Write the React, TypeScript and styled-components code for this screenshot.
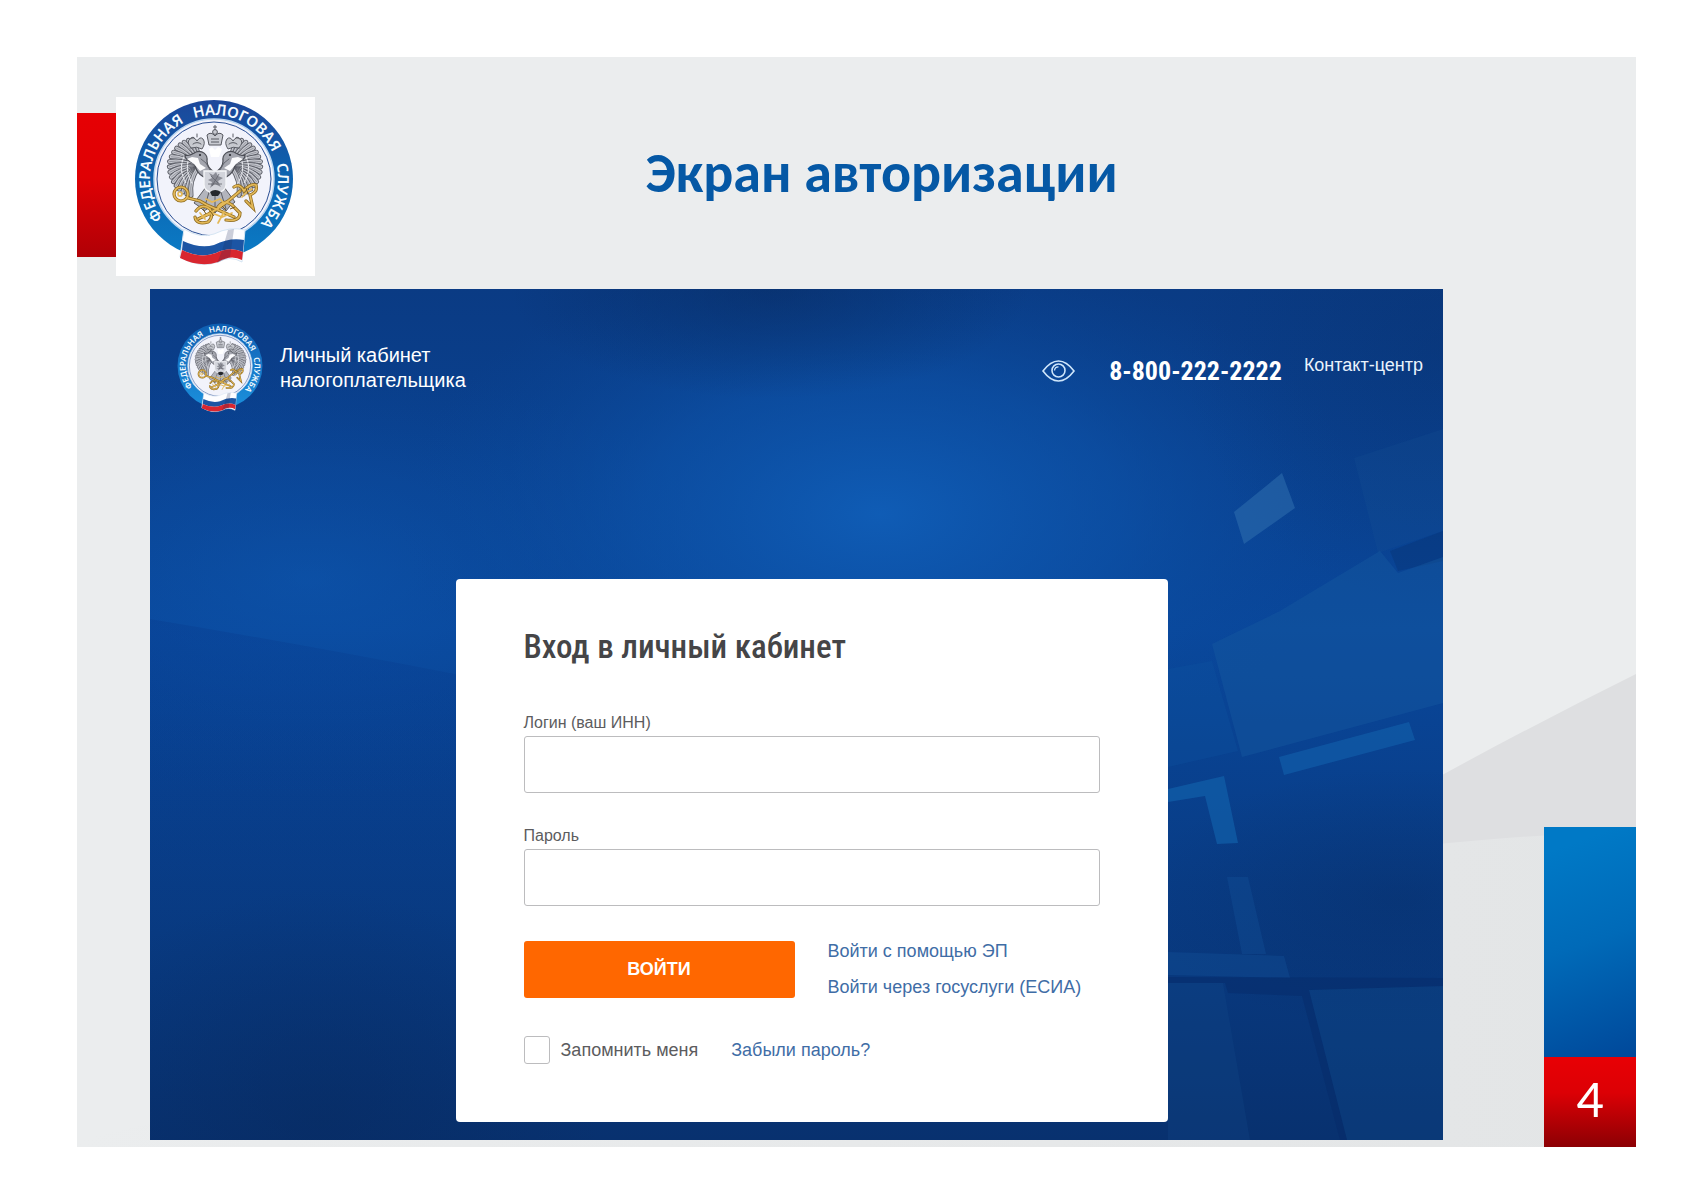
import React, { useId } from "react";
import styled, { createGlobalStyle } from "styled-components";

const GlobalStyle = createGlobalStyle`
  *, *::before, *::after { box-sizing: border-box; }
  body {
    margin: 0;
    background: #fff;
    font-family: "Liberation Sans", Arial, sans-serif;
  }
`;

const condensed = `"Roboto Condensed", "Open Sans Condensed", Roboto, sans-serif`;
const office = `Carlito, Calibri, Lato, sans-serif`;

/* ---------- Slide ---------- */

const Page = styled.main`
  min-height: 100vh;
  padding: 57px 48px 43px 77px;
`;

const Slide = styled.article`
  display: grid;
  background: #ebedee;
`;

const Layer = styled.div`
  grid-area: 1 / 1;
  min-width: 0;
`;

const Backdrop = styled.svg`
  grid-area: 1 / 1;
  width: 100%;
  height: 100%;
  min-height: 0;
  contain: size;
  display: block;
`;

const SlideHeader = styled.header`
  display: flex;
  height: 232px;
  padding-right: 188px;
`;

const RedMark = styled.div`
  width: 39px;
  height: 144px;
  margin-top: 56px;
  background: linear-gradient(#e60004, #e00004 45%, #b00006);
`;

const LogoPlate = styled.div`
  display: flex;
  justify-content: center;
  width: 199px;
  height: 179px;
  margin-top: 40px;
  padding: 2px 4px 0 0;
  background: #fff;
`;

const SlideTitle = styled.h1`
  flex: 1;
  margin: 82px 0 0;
  color: #0558a5;
  font: 700 56px/68px ${office};
  text-align: center;
`;

const SlideBody = styled.div`
  display: flex;
  align-items: flex-end;
  padding-left: 73px;
`;

const SlideTab = styled.aside`
  width: 92px;
  margin-left: 101px;
`;

const BlueTab = styled.div`
  height: 230px;
  background: linear-gradient(160deg, #0079c6 10%, #006ab8 50%, #00489a 100%);
`;

const PageNumber = styled.div`
  height: 90px;
  background: linear-gradient(#e80005, #dc0005 40%, #8c0004);
  color: #fff;
  font: 400 54px/84px ${office};
  text-align: center;
`;

/* ---------- Login screen ---------- */

const Screen = styled.section`
  display: grid;
  flex: 1;
  min-width: 0;
  margin-bottom: 7px;
  background: #0a4290;
`;

const ScreenContent = styled(Layer)`
  display: flex;
  flex-direction: column;
  gap: 166px;
  padding: 34px 20px 18px 27px;
`;

const TopBar = styled.div`
  display: flex;
  align-items: center;
  color: #fff;
`;

const Brand = styled.div`
  display: flex;
  align-items: center;
  gap: 17px;
  margin-right: auto;
  font-size: 20px;
  line-height: 25px;
`;

const IconButton = styled.button`
  display: flex;
  padding: 0;
  border: 0;
  margin: 6px 34px 0 0;
  background: none;
  color: #cfe6fb;
  cursor: pointer;
`;

const Phone = styled.a`
  margin: 6px 22px 0 0;
  color: #fff;
  font: 700 26px/32px ${condensed};
  text-decoration: none;
`;

const ContactLink = styled.a`
  color: #e9f3fd;
  font-size: 18px;
  line-height: 24px;
  margin-bottom: 6px;
  text-decoration: none;
`;

const CardRow = styled.div`
  display: flex;
  justify-content: center;
  padding-left: 23px;
`;

const Card = styled.form`
  width: 100%;
  max-width: 712px;
  padding: 48px 68px 58px;
  border-radius: 4px;
  background: #fff;
`;

const CardTitle = styled.h2`
  margin: 0 0 46px;
  color: #454547;
  font: 500 33px/40px ${condensed};
`;

const Field = styled.div`
  display: flex;
  flex-direction: column;
  gap: 3px;
  margin-bottom: 33px;
`;

const FieldLabel = styled.label`
  color: #5c5c5e;
  font-size: 16px;
  line-height: 20px;
`;

const TextInput = styled.input`
  width: 100%;
  height: 57px;
  padding: 0 16px;
  border: 1px solid #bcbcbe;
  border-radius: 3px;
  background: #fff;
  font: inherit;
  font-size: 18px;
`;

const Actions = styled.div`
  display: flex;
  align-items: center;
  gap: 33px;
  margin-bottom: 37px;
`;

const SubmitButton = styled.button`
  width: 271px;
  height: 57px;
  border: 0;
  border-radius: 3px;
  background: #ff6700;
  color: #fff;
  font: 700 18px/24px "Liberation Sans", Arial, sans-serif;
  cursor: pointer;
`;

const LinkList = styled.div`
  display: flex;
  flex-direction: column;
  gap: 12px;
`;

const TextLink = styled.a`
  color: #3f6da6;
  font-size: 18px;
  line-height: 24px;
  text-decoration: none;
`;

const Options = styled.div`
  display: flex;
  align-items: center;
  gap: 33px;
`;

const Remember = styled.label`
  display: flex;
  align-items: center;
  gap: 11px;
  color: #5c5c5e;
  font-size: 18px;
  line-height: 24px;
`;

const Checkbox = styled.input`
  appearance: none;
  width: 26px;
  height: 28px;
  margin: 0;
  border: 1px solid #bcbcbe;
  border-radius: 3px;
  background: #fff;
  &:checked { background: #3f6da6; }
`;

/* ---------- Drawings ---------- */

const SealText = styled.text`
  fill: #f4fbff;
  font: 600 15px "Noto Sans", sans-serif;
  text-anchor: middle;
`;

const rad = (deg: number) => (deg * Math.PI) / 180;

/* Flight feathers of the left wing, fanned around the shoulder. */
const feathers: string[] = Array.from({ length: 17 }, (_, i) => {
  const a = rad(258 - i * 9.5);
  const reach = 29 - Math.abs(i - 7) * 0.4;
  const cx = 64;
  const cy = 69;
  const x = cx + Math.cos(a) * reach;
  const y = cy + Math.sin(a) * (reach + 3);
  const mx = cx + Math.cos(a + 0.35) * reach * 0.6;
  const my = cy + Math.sin(a + 0.35) * reach * 0.6;
  return `M${cx} ${cy}Q${mx.toFixed(1)} ${my.toFixed(1)} ${x.toFixed(1)} ${y.toFixed(1)}`;
});

function Wing() {
  return (
    <g fill="none" strokeLinecap="round">
      {feathers.map((d) => (
        <g key={d}>
          <path d={d} stroke="#5b5d66" strokeWidth="5" />
          <path d={d} stroke="#c6c8cf" strokeWidth="3.2" />
          <path d={d} stroke="#8b8d96" strokeWidth="0.8" />
        </g>
      ))}
      <path d="M50 58Q44 70 52 84M56 56Q50 70 58 84" stroke="#e6e7ec" strokeWidth="1.2" strokeDasharray="2 1.5" />
      {/* head, beak and small crown */}
      <path d="M76 80C65 78 60 70 61 61C56 63 51 61 51 56C56 58 58 55 62 53C68 51 74 55 73 62C73 67 77 71 80 73Z" fill="#a4a6af" stroke="#4b4d55" strokeWidth="1.2" />
      <path d="M60 65L53 60L58 58L64 59L66 65L72 69L66 72Z" fill="#fbfbfd" />
      <path d="M67 60L72 64L76 71" stroke="#5f616a" strokeWidth="0.9" />
      <circle cx="66" cy="56" r="1.100" fill="#24262c" />
      <path d="M57 49Q52 43 56 40Q60 37 63 42Q66 37 69 40Q72 44 68 50Q63 47 57 49Z" fill="#c7c9cf" stroke="#5a5c64" strokeWidth="1" />
      <path d="M59 45Q63 42 67 45M63 38V35" stroke="#5a5c64" strokeWidth="1" />
    </g>
  );
}

function Seal({ width, bright }: { width: number; bright?: boolean }) {
  const id = useId().replace(/:/g, "");
  return (
    <svg width={width} height={Math.round((width * 168) / 160)} viewBox="0 0 160 168" preserveAspectRatio="none" role="img" aria-label="Федеральная налоговая служба">
      <defs>
        <linearGradient id={`${id}r`} x1="0" y1="0" x2="0" y2="1">
          <stop offset="0" stopColor={bright ? "#0e5fb2" : "#1d479a"} />
          <stop offset="0.45" stopColor={bright ? "#1676c6" : "#0c61ae"} />
          <stop offset="1" stopColor={bright ? "#1b90dc" : "#0b7cc6"} />
        </linearGradient>
        <path id={`${id}t`} d="M80 144A64 64 0 1 1 80 16A64 64 0 1 1 80 144" />
      </defs>
      <circle cx="80" cy="80" r="79" fill={`url(#${id}r)`} />
      <circle cx="80" cy="80" r="60" fill="#f2f3fb" stroke="#b9d6f0" strokeWidth="1.5" />
      <circle cx="80" cy="80" r="57" fill="none" stroke="#2a4f94" strokeWidth="1" />
      <SealText><textPath href={`#${id}t`} startOffset="28.4%">ФЕДЕРАЛЬНАЯ</textPath></SealText>
      <SealText><textPath href={`#${id}t`} startOffset="56.6%">НАЛОГОВАЯ</textPath></SealText>
      <SealText><textPath href={`#${id}t`} startOffset="79.200%">СЛУЖБА</textPath></SealText>

      {/* tail */}
      <g stroke="#5a5c64" strokeWidth="1" fill="#b3b5bd">
        <path d="M72 88L60 104L66 108L70 112L76 108L81 114L86 108L92 112L96 107L101 103L90 88Z" />
        <path d="M76 90L70 110M81 90V112M86 90L92 110" fill="none" />
      </g>
      <Wing />
      <g transform="translate(162 0) scale(-1 1)"><Wing /></g>

      {/* main crown */}
      <g fill="#c9cbd2" stroke="#565860" strokeWidth="1">
        <path d="M75 46L73 36Q77 32 81 37Q85 32 89 36L87 46Z" />
        <path d="M77 40H85M77 43H85" />
        <circle cx="81" cy="33" r="2.400" />
        <path d="M81 31V26M79 28H83" />
      </g>
      <path d="M75 50L78 48L81 51L84 48L88 50L85 58H77Z" fill="#fff" />

      {/* breast shield with the rider */}
      <path d="M70 72H92V86Q92 92 81 95Q70 92 70 86Z" fill="#d2d4db" stroke="#f6f7fa" strokeWidth="1.400" />
      <path d="M75 74L79 76L82 73L84 77L89 79L84 82L87 88L81 85L76 89L78 83L74 81L78 79Z" fill="#8b8d96" />
      <path d="M77 77L84 84M85 75L78 87M74 85H88" stroke="#62646d" strokeWidth="0.800" />
      <path d="M76 93Q81 89 87 93L84 97H78Z" fill="#26282d" />

      {/* crossed golden keys and ribbons */}
      <g fill="none" stroke="#8d6a1e" strokeWidth="3.200" strokeLinecap="round">
        <circle cx="47" cy="95" r="7" />
        <path d="M54 99L66 102L73 106L100 118M64 120Q84 112 106 92M62 112Q68 104 76 110Q80 118 74 123Q62 126 61 118M84 108Q90 100 98 106L106 114Q106 123 92 121M100 88Q106 84 110 92Q116 84 122 86Q124 93 116 96L119 109L112 102" />
      </g>
      <g fill="none" stroke="#e4b958" strokeWidth="1.700" strokeLinecap="round">
        <circle cx="47" cy="95" r="7" />
        <circle cx="46" cy="95" r="2" />
        <path d="M54 99L66 102L73 106L100 118M64 120Q84 112 106 92M62 112Q68 104 76 110Q80 118 74 123Q62 126 61 118M84 108Q90 100 98 106L106 114Q106 123 92 121M100 88Q106 84 110 92Q116 84 122 86Q124 93 116 96L119 109L112 102" />
        <path d="M68 118L78 114L88 118L98 114M84 124L90 113M72 100L78 103L86 100L90 104M108 98L113 93L118 90M66 114L71 120" />
      </g>
      <path d="M76 112L80 117M88 107L92 111M96 110L101 108M69 110L72 115M112 89L114 95" stroke="#7a5a18" strokeWidth="1" fill="none" />

      {/* flag */}
      <path d="M50 130Q66 140 80 135Q96 127 111 131L108 163Q96 156 84 163Q66 170 46 158Z" fill="#fdfdff" stroke="#d5e5f3" strokeWidth="1" />
      <path d="M49 142Q66 150 80 146Q96 138 110 141L109 153Q96 147 82 154Q66 160 48 151Z" fill="#1c55a4" />
      <path d="M48 151Q66 160 82 154Q96 147 109 153L108 161Q97 155 84 163Q66 169 46 159Z" fill="#d8262f" />
      <path d="M94 131L100 130L96 158L83 164L88 152Z" fill="#1a2a55" opacity="0.22" />
    </svg>
  );
}

function EyeIcon() {
  return (
    <svg width="33" height="22" viewBox="0 0 33 22" fill="none" stroke="currentColor" strokeWidth="1.600" aria-hidden="true">
      <path d="M1 11Q8.500 1 16.500 1T32 11Q24.500 21 16.500 21T1 11Z" />
      <circle cx="16.500" cy="10.500" r="6.500" />
      <path d="M12.500 10.500A4 4 0 0 1 16.500 6.800" strokeWidth="1.300" />
    </svg>
  );
}

function SlideBackdrop() {
  return (
    <Backdrop viewBox="0 0 1559 1090" preserveAspectRatio="none" aria-hidden="true">
      <defs>
        <linearGradient id="floor" x1="0" y1="0" x2="1" y2="0">
          <stop offset="0" stopColor="#ebedee" />
          <stop offset="1" stopColor="#e3e5e6" />
        </linearGradient>
      </defs>
      <path d="M1300 754Q1430 681 1559 617V1090H1300Z" fill="#dedfe1" />
      <path d="M1300 794Q1430 778 1559 774V1090H0V1083Q900 880 1300 794Z" fill="url(#floor)" />
    </Backdrop>
  );
}

function ScreenBackdrop() {
  return (
    <Backdrop viewBox="0 0 1293 851" preserveAspectRatio="none" aria-hidden="true">
      <defs>
        <linearGradient id="base" x1="0" y1="0" x2="0" y2="1">
          <stop offset="0" stopColor="#0a3b84" />
          <stop offset="0.4" stopColor="#09479b" />
          <stop offset="1" stopColor="#08316f" />
        </linearGradient>
        <radialGradient id="glow">
          <stop offset="0" stopColor="#105fb9" />
          <stop offset="0.5" stopColor="#0d54ab" stopOpacity="0.65" />
          <stop offset="1" stopColor="#0a4798" stopOpacity="0" />
        </radialGradient>
        <radialGradient id="shade">
          <stop offset="0" stopColor="#07285c" stopOpacity="0.8" />
          <stop offset="1" stopColor="#07285c" stopOpacity="0" />
        </radialGradient>
        <linearGradient id="sweep" x1="0" y1="0" x2="0" y2="1">
          <stop offset="0" stopColor="#063384" stopOpacity="0.6" />
          <stop offset="1" stopColor="#063384" stopOpacity="0" />
        </linearGradient>
      </defs>
      <rect width="1293" height="851" fill="url(#base)" />
      <ellipse cx="160" cy="290" rx="420" ry="220" fill="url(#glow)" opacity="0.4" />
      <ellipse cx="730" cy="225" rx="480" ry="270" fill="url(#glow)" opacity="0.9" />
      <ellipse cx="620" cy="0" rx="260" ry="110" fill="url(#shade)" opacity="0.6" />
      <ellipse cx="1293" cy="60" rx="260" ry="260" fill="url(#shade)" opacity="0.3" />
      <ellipse cx="170" cy="830" rx="280" ry="230" fill="url(#shade)" opacity="0.55" />
      <path d="M0 330Q150 355 310 386V650H0Z" fill="url(#sweep)" opacity="0.4" />
      <ellipse cx="1250" cy="610" rx="260" ry="130" fill="url(#shade)" opacity="0.4" />

      <path d="M1204 169L1293 140V242L1228 264Z" fill="#1a5596" opacity="0.2" />
      <path d="M1240 262L1293 242V272L1248 282Z" fill="#062f6b" opacity="0.3" />
      <path d="M1062 355L1130 322L1230 262L1248 284L1293 268V414L1092 468Z" fill="#16589f" opacity="0.45" />
      <path d="M1018 380L1062 372L1088 462L1018 478Z" fill="#0f57a5" opacity="0.25" />
      <path d="M1084 223L1132 184L1145 219L1094 255Z" fill="#2f6fae" opacity="0.55" />
      <path d="M1129 468L1259 433L1265 451L1134 486Z" fill="#115da8" opacity="0.7" />
      <path d="M1018 500L1074 487L1088 554L1067 555L1055 507L1018 513Z" fill="#1160a9" opacity="0.7" />
      <path d="M1077 588L1098 588L1116 665L1092 665Z" fill="#15539a" opacity="0.35" />
      <path d="M1018 663L1134 667L1140 689L1018 686Z" fill="#14529a" opacity="0.35" />
      <path d="M1018 688L1293 689V697L1159 701L1197 851H1190L1152 707L1078 704L1075 694H1018Z" fill="#062a68" opacity="0.45" />
      <path d="M1018 694H1073L1100 851H1018Z" fill="#124b8a" opacity="0.25" />
      <path d="M1159 701L1293 697V851H1197Z" fill="#124b8a" opacity="0.3" />
    </Backdrop>
  );
}

/* ---------- Page ---------- */

export default function App() {
  return (
    <Page>
      <GlobalStyle />
      <Slide>
        <SlideBackdrop />
        <Layer>
          <SlideHeader>
            <RedMark />
            <LogoPlate><Seal width={160} /></LogoPlate>
            <SlideTitle>Экран авторизации</SlideTitle>
          </SlideHeader>
          <SlideBody>
            <Screen>
              <ScreenBackdrop />
              <ScreenContent>
                <TopBar>
                  <Brand>
                    <Seal width={86} bright />
                    <span>Личный кабинет<br />налогоплательщика</span>
                  </Brand>
                  <IconButton type="button" aria-label="Версия для слабовидящих"><EyeIcon /></IconButton>
                  <Phone href="tel:88002222222">8-800-222-2222</Phone>
                  <ContactLink href="#contact">Контакт-центр</ContactLink>
                </TopBar>
                <CardRow>
                  <Card onSubmit={(e) => e.preventDefault()}>
                    <CardTitle>Вход в личный кабинет</CardTitle>
                    <Field>
                      <FieldLabel htmlFor="login">Логин (ваш ИНН)</FieldLabel>
                      <TextInput id="login" type="text" />
                    </Field>
                    <Field>
                      <FieldLabel htmlFor="password">Пароль</FieldLabel>
                      <TextInput id="password" type="password" />
                    </Field>
                    <Actions>
                      <SubmitButton type="submit">ВОЙТИ</SubmitButton>
                      <LinkList>
                        <TextLink href="#signature">Войти с помощью ЭП</TextLink>
                        <TextLink href="#esia">Войти через госуслуги (ЕСИА)</TextLink>
                      </LinkList>
                    </Actions>
                    <Options>
                      <Remember>
                        <Checkbox type="checkbox" />
                        Запомнить меня
                      </Remember>
                      <TextLink href="#forgot">Забыли пароль?</TextLink>
                    </Options>
                  </Card>
                </CardRow>
              </ScreenContent>
            </Screen>
            <SlideTab>
              <BlueTab />
              <PageNumber>4</PageNumber>
            </SlideTab>
          </SlideBody>
        </Layer>
      </Slide>
    </Page>
  );
}
